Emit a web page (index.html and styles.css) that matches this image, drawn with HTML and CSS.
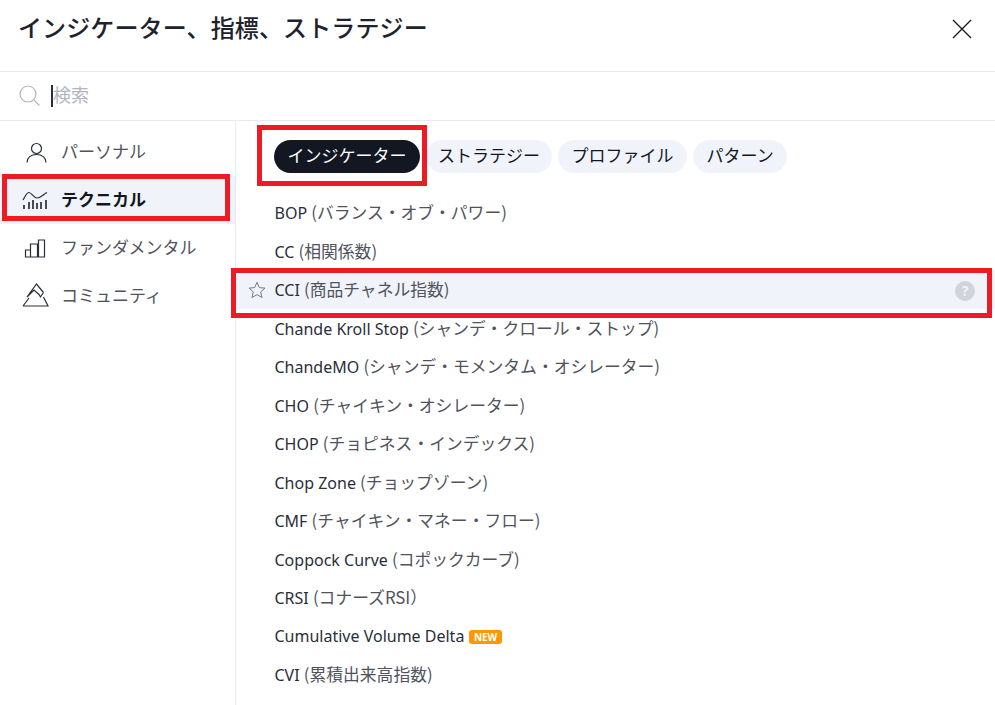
FILE: index.html
```html
<!DOCTYPE html>
<html lang="ja">
<head>
<meta charset="utf-8">
<title>インジケーター、指標、ストラテジー</title>
<link rel="stylesheet" href="styles.css">
</head>
<body>
<div class="dialog">
  <header class="header">
    <h1 class="title">インジケーター、指標、ストラテジー</h1>
    <svg class="close" width="20" height="20" viewBox="0 0 20 20"><path d="M1 1l18 18M19 1L1 19" fill="none" stroke="#131722" stroke-width="1.3"/></svg>
  </header>
  <div class="search">
    <svg class="search-icon" width="22" height="22" viewBox="0 0 22 22" fill="none" stroke="#b2b5be" stroke-width="1.2"><circle cx="9" cy="9" r="8"/><path d="M14.700 14.700l5.800 5.800"/></svg>
    <span class="caret"></span>
    <span class="placeholder">検索</span>
  </div>
  <div class="body">
    <nav class="side">
      <div class="side-item">
        <svg viewBox="22 138 28 28" fill="none" stroke="#2a2e39" stroke-width="1.2"><circle cx="36.500" cy="148.500" r="5"/><path d="M27 162.500c0-5 4-8 9.500-8s9.500 3 9.500 8"/></svg>
        <span>パーソナル</span>
      </div>
      <div class="side-item active">
        <svg viewBox="22 186 28 28" fill="none" stroke="#2a2e39" stroke-width="1.2"><path d="M23 200c2-3 3.500-7.500 6-7.500s4.500 5.500 8 5.500 6-3.500 10-5.500"/><path stroke-width="1.700" d="M24 209v-4M29 209v-7M33 209v-9M37 209v-6M41 209v-7M46 209v-9"/></svg>
        <span>テクニカル</span>
      </div>
      <div class="side-item">
        <svg viewBox="22 234 28 28" fill="none" stroke="#2a2e39" stroke-width="1.200"><path d="M25.500 257v-7h5v7zM30.500 257v-13h7v13zM38.500 257v-17h6v17zM25.500 257h19"/></svg>
        <span>ファンダメンタル</span>
      </div>
      <div class="side-item">
        <svg viewBox="22 282 28 28" fill="none" stroke="#2a2e39" stroke-width="1.200"><path d="M27 297l9.500-13 7 8.500M27 297l7-7 5 4.500 1.500 2.500 3-4.500"/><path d="M23 306h25l-4.500-9M23 306l6-8"/></svg>
        <span>コミュニティ</span>
      </div>
    </nav>
    <main class="content">
      <div class="pills">
        <span class="pill selected">インジケーター</span>
        <span class="pill tight">ストラテジー</span>
        <span class="pill">プロファイル</span>
        <span class="pill">パターン</span>
      </div>
      <ul class="list">
        <li class="row"><span>BOP <span class="ja">(バランス・オブ・パワー)</span></span></li>
        <li class="row"><span>CC <span class="ja">(相関係数)</span></span></li>
        <li class="row hover">
          <svg class="star" width="18" height="18" viewBox="0 0 18 18"><path d="M9 1.300l2.300 5.300 5.700.5-4.300 3.800 1.300 5.600L9 13.600l-5 2.900 1.300-5.600L1 7.100l5.700-.5z" fill="none" stroke="#787b86" stroke-width="1"/></svg>
          <span>CCI <span class="ja">(商品チャネル指数)</span></span>
          <span class="help">?</span>
        </li>
        <li class="row"><span>Chande Kroll Stop <span class="ja">(シャンデ・クロール・ストップ)</span></span></li>
        <li class="row"><span>ChandeMO <span class="ja">(シャンデ・モメンタム・オシレーター)</span></span></li>
        <li class="row"><span>CHO <span class="ja">(チャイキン・オシレーター)</span></span></li>
        <li class="row"><span>CHOP <span class="ja">(チョピネス・インデックス)</span></span></li>
        <li class="row"><span>Chop Zone <span class="ja">(チョップゾーン)</span></span></li>
        <li class="row"><span>CMF <span class="ja">(チャイキン・マネー・フロー)</span></span></li>
        <li class="row"><span>Coppock Curve <span class="ja">(コポックカーブ)</span></span></li>
        <li class="row"><span>CRSI <span class="ja">(コナーズRSI）</span></span></li>
        <li class="row"><span>Cumulative Volume Delta</span><span class="badge">NEW</span></li>
        <li class="row"><span>CVI <span class="ja">(累積出来高指数)</span></span></li>
      </ul>
    </main>
  </div>
  <div class="mark mark-side"></div>
  <div class="mark mark-pill"></div>
  <div class="mark mark-row"></div>
</div>
</body>
</html>
```
FILE: styles.css
```css
* { box-sizing: border-box; }
html, body { margin: 0; padding: 0; background: #fff; }
body {
  font-family: "Noto Sans", "Noto Sans CJK JP", sans-serif;
  color: #131722;
}
.dialog {
  position: relative;
  width: 995px;
  height: 705px;
  overflow: hidden;
  display: flex;
  flex-direction: column;
}
.header {
  height: 72px;
  flex: none;
  display: flex;
  align-items: flex-start;
  justify-content: space-between;
  padding: 10px 23px 0 18px;
  border-bottom: 1px solid #e9ebf2;
}
.title {
  margin: 0;
  font-size: 24px;
  line-height: 34px;
  letter-spacing: 0.12px;
  font-weight: 500;
  color: #1e222d;
  font-family: "Noto Sans CJK JP", sans-serif;
}
.close { margin-top: 9px; }
.search {
  height: 49px;
  flex: none;
  display: flex;
  align-items: center;
  padding-left: 19px;
  border-bottom: 1px solid #e9ebf2;
}
.search-icon { flex: none; }
.caret {
  width: 2px;
  height: 22px;
  margin-left: 10px;
  background: #2a2e39;
}
.placeholder {
  margin: 0 0 4px 0;
  font-size: 18px;
  color: #b2b5be;
  font-family: "Noto Sans CJK JP", sans-serif;
}
.body { flex: 1; display: flex; min-height: 0; }
.side {
  width: 236px;
  flex: none;
  padding-top: 7px;
  border-right: 1px solid #e9ebf2;
}
.side-item {
  height: 48px;
  display: flex;
  align-items: center;
  gap: 12px;
  padding-left: 22px;
  font-size: 17px;
  color: #50535e;
  font-family: "Noto Sans CJK JP", sans-serif;
}
.side-item svg { flex: none; width: 28px; height: 28px; overflow: visible; }
.side-item span { margin: 0 0 4px -1px; }
.side-item.active {
  background: #f0f3fa;
  color: #131722;
  font-weight: 700;
}
.content { flex: 1; min-width: 0; }
.pills {
  display: flex;
  gap: 6px;
  padding: 19px 0 0 38px;
  height: 72px;
}
.pill {
  height: 33px;
  display: flex;
  align-items: center;
  padding: 0 13.5px 5px;
  border-radius: 17px;
  background: #f0f3fa;
  font-size: 17px;
  color: #131722;
  font-family: "Noto Sans CJK JP", sans-serif;
}
.pill.tight { padding: 0 12px 5px; }
.pill.selected { background: #131722; color: #fff; }
.list { list-style: none; margin: 0; padding: 0; }
.row {
  height: 38.5px;
  display: flex;
  align-items: center;
  gap: 5px;
  padding-left: 38.5px;
  font-size: 16px;
  color: #2a2e39;
  white-space: pre;
}
.ja {
  font-family: "Noto Sans CJK JP", sans-serif;
  font-size: 16.8px;
  color: #50535e;
}
.row.hover {
  position: relative;
  background: #f0f3fa;
  padding-right: 20px;
}
.star { position: absolute; left: 12px; top: 11px; }
.help {
  margin: 3px 0 0 auto;
  width: 20px;
  height: 20px;
  border-radius: 50%;
  background: #d1d4dc;
  color: #f0f3fa;
  font-size: 14px;
  font-weight: 700;
  line-height: 20px;
  text-align: center;
}
.badge {
  height: 14px;
  margin-top: 2px;
  padding: 0 4.5px;
  border-radius: 3px;
  background: #ff9800;
  color: #fff;
  font-size: 10px;
  font-weight: 700;
  line-height: 14px;
}
.mark { position: absolute; border: 5px solid #ed1c24; pointer-events: none; }
.mark-side { left: 2px; top: 174px; width: 228px; height: 47px; }
.mark-pill { left: 257px; top: 125px; width: 170px; height: 61px; }
.mark-row { left: 231px; top: 268px; width: 761px; height: 50px; }
```
